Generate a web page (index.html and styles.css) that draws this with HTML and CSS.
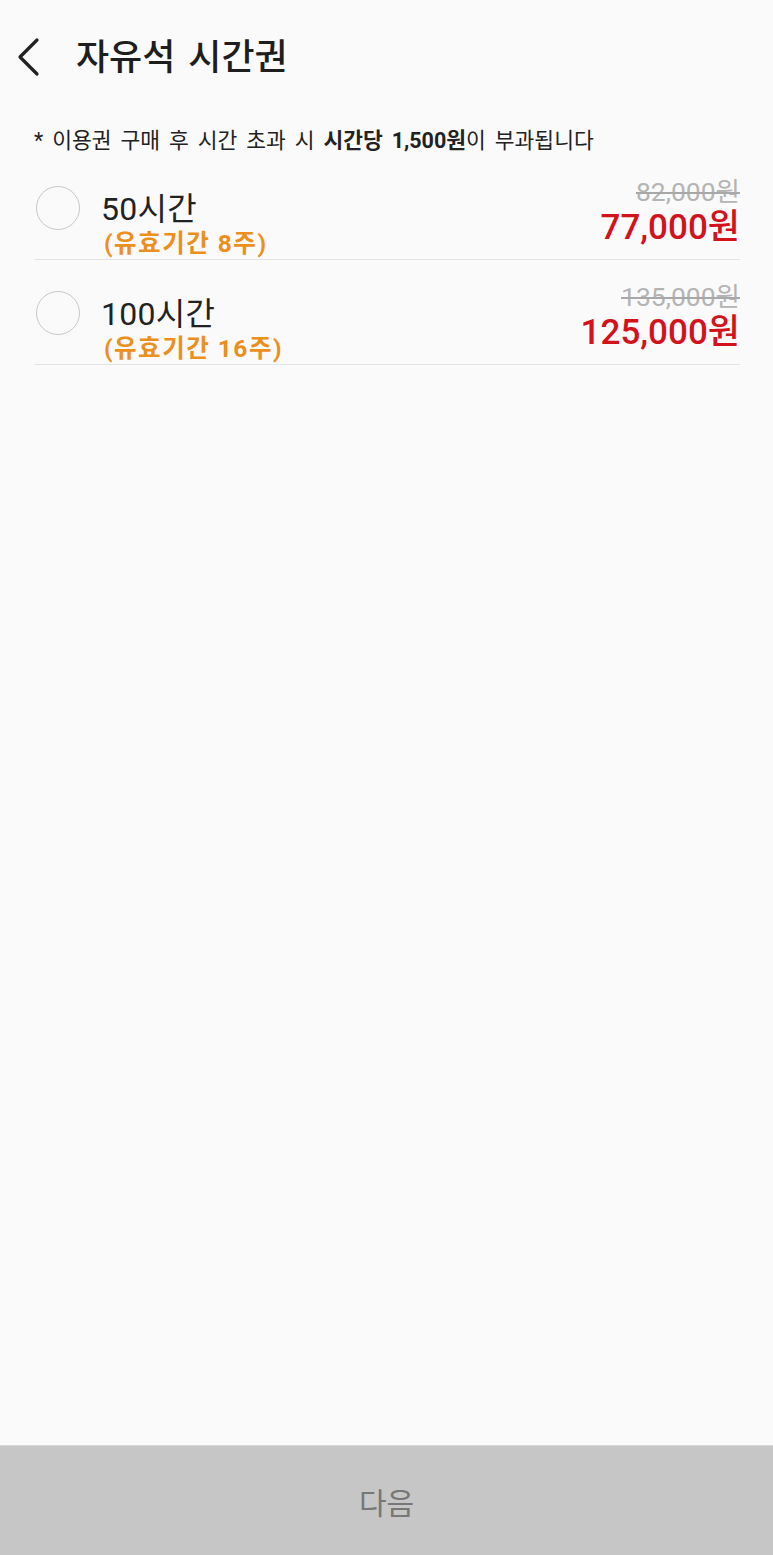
FILE: index.html
```html
<!DOCTYPE html>
<html lang="ko">
<head>
<meta charset="utf-8">
<link rel="stylesheet" href="styles.css">
</head>
<body>
<div class="screen">
  <header class="header">
    <svg class="back" width="26" height="40" viewBox="0 0 26 40"><path d="M22 3 L5 20 L22 37" fill="none" stroke="#222" stroke-width="3.2" stroke-linecap="round" stroke-linejoin="round"/></svg>
    <h1 class="title">자유석 시간권</h1>
  </header>
  <p class="notice">* 이용권 구매 후 시간 초과 시 <b>시간당 1,500원</b>이 부과됩니다</p>
  <ul class="list">
    <li class="row">
      <div class="left">
        <span class="radio"></span>
        <div class="info">
          <div class="name">50시간</div>
          <div class="period">(유효기간 8주)</div>
        </div>
      </div>
      <div class="right">
        <div class="old">82,000원</div>
        <div class="price">77,000원</div>
      </div>
    </li>
    <li class="row">
      <div class="left">
        <span class="radio"></span>
        <div class="info">
          <div class="name">100시간</div>
          <div class="period">(유효기간 16주)</div>
        </div>
      </div>
      <div class="right">
        <div class="old">135,000원</div>
        <div class="price">125,000원</div>
      </div>
    </li>
  </ul>
  <div class="spacer"></div>
  <button class="next">다음</button>
</div>
</body>
</html>
```
FILE: styles.css
```css
* { box-sizing: border-box; }
html, body { margin: 0; padding: 0; }
body {
  background: #fafafa;
  font-family: Roboto, "Noto Sans CJK KR", sans-serif;
  color: #222;
}
.screen {
  width: 773px;
  height: 1555px;
  display: flex;
  flex-direction: column;
}
.header {
  height: 114px;
  display: flex;
  align-items: center;
  padding-left: 15px;
  gap: 35px;
}
.back { display: block; margin-top: -1px; }
.title {
  margin: -6px 0 0 0;
  font-size: 36px;
  font-weight: 500;
  word-spacing: 4px;
  color: #1e1e1e;
}
.notice {
  margin: 13px 0 0 0;
  padding-left: 34px;
  font-size: 21.5px;
  line-height: 28px;
  word-spacing: 3.6px;
  color: #222;
}
.notice b { font-weight: 700; }
.list {
  list-style: none;
  margin: 0;
  padding: 0 33px 0 34px;
}
.row {
  height: 105px;
  display: flex;
  justify-content: space-between;
  align-items: flex-start;
  padding-top: 23px;
  border-bottom: 1px solid #e4e4e4;
}
.left {
  display: flex;
  align-items: flex-start;
  margin-top: 11px;
}
.radio {
  width: 44px;
  height: 44px;
  border: 1.5px solid #c8c8c8;
  border-radius: 50%;
  margin-left: 2px;
  margin-top: -3px;
  flex: none;
}
.info { margin-left: 21px; }
.name {
  font-size: 32px;
  line-height: 40px;
  font-weight: 400;
  letter-spacing: 0.3px;
  color: #222;
}
.period {
  font-size: 24.5px;
  line-height: 30px;
  font-weight: 700;
  letter-spacing: 1.5px;
  color: #ec8f1c;
  padding-left: 3px;
}
.right {
  display: flex;
  flex-direction: column;
  align-items: flex-end;
  margin-top: -1px;
}
.old {
  font-size: 26.5px;
  line-height: 30px;
  color: #b4b4b4;
  text-decoration: line-through;
  text-decoration-color: #a8a8a8;
  text-decoration-thickness: 2px;
}
.price {
  font-size: 35px;
  line-height: 42px;
  font-weight: 500;
  color: #d3121b;
  margin-top: 0;
}
.spacer { flex: 1; }
.next {
  height: 110px;
  border: none;
  background: #c6c6c6;
  font-family: inherit;
  font-size: 30px;
  color: #777;
  width: 100%;
  padding: 0;
  border-top: 1px solid #d8d8d8;
}
```
